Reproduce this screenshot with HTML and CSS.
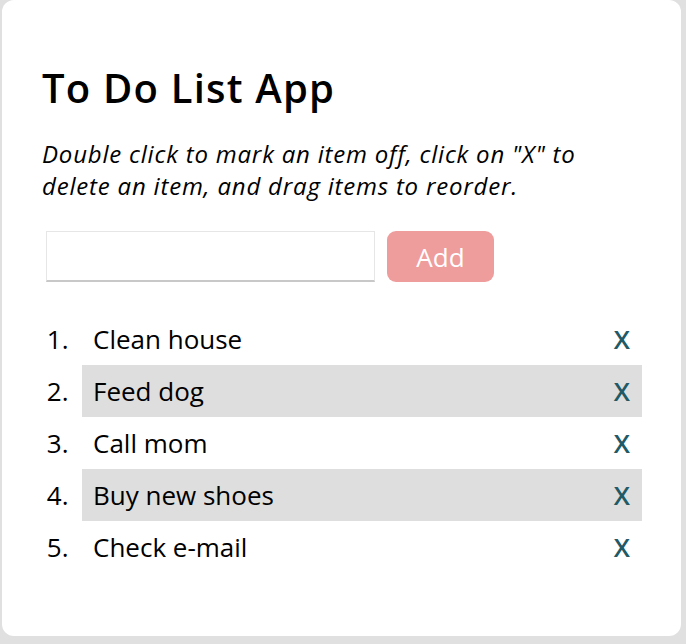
FILE: index.html
```html
<!DOCTYPE html>
<html>
<head>
<meta charset="utf-8">
<link rel="stylesheet" href="styles.css">
</head>
<body>
<div class="card">
  <h1 class="title">To Do List App</h1>
  <p class="hint">Double click to mark an item off, click on "X" to delete an item, and drag items to reorder.</p>
  <form class="add-form">
    <input class="add-input" type="text">
    <button class="add-btn" type="button">Add</button>
  </form>
  <ol class="todo-list">
    <li class="todo"><div class="todo-row"><span class="todo-text">Clean house</span><span class="todo-x">X</span></div></li>
    <li class="todo alt"><div class="todo-row"><span class="todo-text">Feed dog</span><span class="todo-x">X</span></div></li>
    <li class="todo"><div class="todo-row"><span class="todo-text">Call mom</span><span class="todo-x">X</span></div></li>
    <li class="todo alt"><div class="todo-row"><span class="todo-text">Buy new shoes</span><span class="todo-x">X</span></div></li>
    <li class="todo"><div class="todo-row"><span class="todo-text">Check e-mail</span><span class="todo-x">X</span></div></li>
  </ol>
</div>
</body>
</html>
```

FILE: styles.css
```css
html, body {
  margin: 0;
  padding: 0;
  background: #e0e0e0;
  height: 100%;
}
body {
  font-family: "Open Sans", "Noto Sans", sans-serif;
  color: #000;
  padding: 0 5px 8px 2px;
  box-sizing: border-box;
}
.card {
  background: #fff;
  border-radius: 12px;
  height: 636px;
  box-sizing: border-box;
  padding: 58px 39px 0 40px;
}
.title {
  margin: 0;
  font-size: 40px;
  font-weight: 600;
  letter-spacing: 1.2px;
  line-height: 60px;
}
.hint {
  margin: 20px 0 0 0;
  font-size: 24px;
  font-style: italic;
  letter-spacing: 0.8px;
  line-height: 32px;
}
.add-form {
  display: flex;
  gap: 12px;
  margin-top: 29px;
  padding-left: 4px;
}
.add-input {
  width: 329px;
  height: 51px;
  box-sizing: border-box;
  border: 1px solid #e6e6e6;
  border-bottom: 2px solid #c8c8c8;
  margin: 0;
  padding: 0 10px;
  font-family: inherit;
  font-size: 22px;
}
.add-btn {
  width: 107px;
  height: 51px;
  border: none;
  border-radius: 9px;
  background: #ef9c9c;
  color: #fff;
  font-family: inherit;
  font-size: 26px;
  padding: 0;
}
.todo-list {
  margin: 31px 0 0 0;
  padding: 0 0 0 40px;
  list-style: decimal;
  font-size: 26px;
}
.todo {
  height: 52px;
  line-height: 52px;
}
.todo::marker {
  content: counter(list-item) ".  ";
}
.todo-row {
  display: flex;
  justify-content: space-between;
  align-items: center;
  height: 52px;
  padding: 0 12px 0 11px;
}
.todo.alt {
  background: #dedede;
}
.todo-x {
  color: #1f5a66;
  font-weight: 600;
}
```
